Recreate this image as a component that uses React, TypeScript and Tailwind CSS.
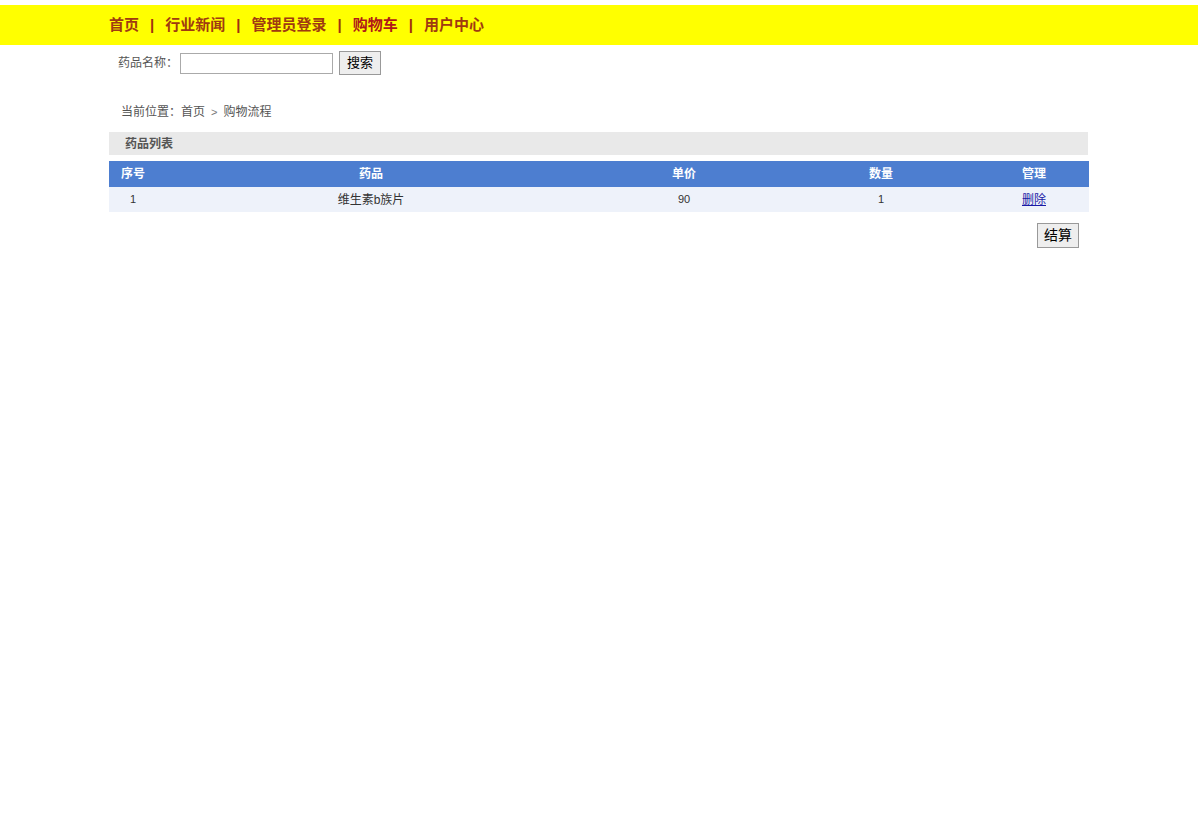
import React from "react";

const font = { fontFamily: '"Liberation Sans", "Noto Sans CJK SC", sans-serif' };

export default function App() {
  const links = ["首页", "行业新闻", "管理员登录", "购物车", "用户中心"];

  return (
    <div className="min-h-[832px] bg-white text-xs text-[#333]" style={font}>
      {/* Top nav */}
      <div className="pt-[5px]">
        <div className="h-10 bg-[#ffff00]">
          <div className="mx-auto flex h-full w-[980px] items-center text-[15px] font-bold">
            {links.map((item, i) => (
              <React.Fragment key={i}>
                {i > 0 && <span className="mx-[11px] text-[#a03010]">|</span>}
                <a
                  href="#"
                  className={i === 3 ? "text-[#b01818]" : "text-[#a03a10]"}
                >
                  {item}
                </a>
              </React.Fragment>
            ))}
          </div>
        </div>
      </div>

      <div className="mx-auto w-[980px]">
        {/* Search */}
        <div className="mt-[6px] flex items-center pl-[9px]">
          <span className="text-[#555]">药品名称：</span>
          <input
            type="text"
            className="ml-[2px] h-[21px] w-[153px] border border-[#aaa] bg-white"
          />
          <button className="ml-[6px] h-6 w-[42px] border border-[#999] bg-[#eee] text-[13px] text-black">
            搜索
          </button>
        </div>

        {/* Breadcrumb */}
        <div className="mt-[29px] flex items-center pl-3 text-[#555]">
          <span>当前位置：</span>
          <span>首页</span>
          <span className="mx-[6px] text-[11px] text-[#777]">&gt;</span>
          <span>购物流程</span>
        </div>

        {/* Section title */}
        <div className="mt-[12px] flex h-[23px] w-[979px] items-center bg-[#e9e9e9] pl-4 font-bold text-[#555]">
          药品列表
        </div>

        {/* Table */}
        <table className="mt-[6px] w-[980px] border-collapse">
          <thead>
            <tr className="h-[26px] bg-[#4d7ed0] font-bold text-white">
              <th className="w-12 text-center">序号</th>
              <th className="w-[428px] text-center">药品</th>
              <th className="w-[198px] text-center">单价</th>
              <th className="w-[196px] text-center">数量</th>
              <th className="text-center">管理</th>
            </tr>
          </thead>
          <tbody>
            <tr className="h-[25px] bg-[#eef2fa] text-[11px] text-[#333]">
              <td className="text-center">1</td>
              <td className="text-center text-xs">维生素b族片</td>
              <td className="text-center">90</td>
              <td className="text-center">1</td>
              <td className="text-center text-xs">
                <a href="#" className="text-[#1a1aa6] underline">
                  删除
                </a>
              </td>
            </tr>
          </tbody>
        </table>

        <div className="mt-[11px] flex justify-end pr-[10px]">
          <button className="h-[25px] w-[42px] border border-[#999] bg-[#eee] text-[14px] text-black">
            结算
          </button>
        </div>
      </div>
    </div>
  );
}
